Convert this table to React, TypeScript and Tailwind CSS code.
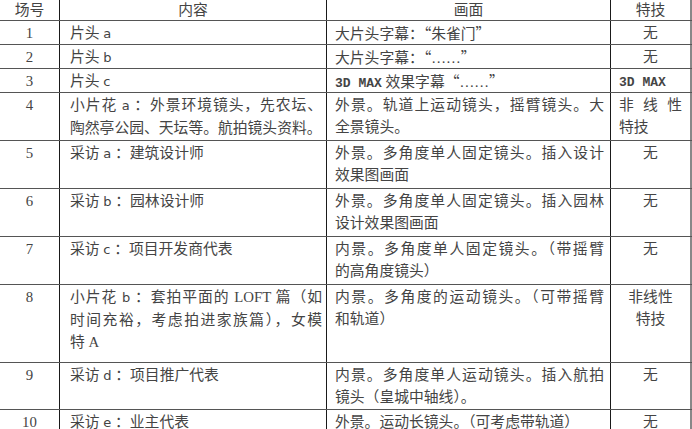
import React from "react";

type Cell = React.ReactNode[];

type Row = {
  no: string;
  h: string;
  content: Cell;
  shot: Cell;
  fx: React.ReactNode;
};

// latin letters in the content column look like a wide sans
const L = ({ children }: { children: React.ReactNode }) => (
  <span className="font-['DejaVu_Sans','Noto_Sans_CJK_SC',sans-serif] text-[13px]">
    {children}
  </span>
);

const M = ({ children }: { children: React.ReactNode }) => (
  <span className="font-['Liberation_Mono',monospace] text-[13px] font-bold">
    {children}
  </span>
);

// full-width punctuation (quotes)
const C = ({ children }: { children: React.ReactNode }) => (
  <span className="font-['Noto_Sans_CJK_SC',sans-serif]">{children}</span>
);

const None = () => <div className="text-center">无</div>;

const rows: Row[] = [
  {
    no: "1",
    h: "h-[24px]",
    content: [<>片头 <L>a</L></>],
    shot: [<>大片头字幕：<C>“</C>朱雀门<C>”</C></>],
    fx: <None />,
  },
  {
    no: "2",
    h: "h-[24px]",
    content: [<>片头 <L>b</L></>],
    shot: [<>大片头字幕：<C>“</C>……<C>”</C></>],
    fx: <None />,
  },
  {
    no: "3",
    h: "h-[24px]",
    content: [<>片头 <L>c</L></>],
    shot: [<><M>3D MAX</M> 效果字幕<C>“</C>……<C>”</C></>],
    fx: <M>3D MAX</M>,
  },
  {
    no: "4",
    h: "h-[48px]",
    content: [
      <>小片花 <L>a</L> ：外景环境镜头，先农坛、</>,
      "陶然亭公园、天坛等。航拍镜头资料。",
    ],
    shot: ["外景。轨道上运动镜头，摇臂镜头。大", "全景镜头。"],
    fx: (
      <>
        <div className="[text-align-last:justify]">非线性</div>
        <div>特技</div>
      </>
    ),
  },
  {
    no: "5",
    h: "h-[48px]",
    content: [<>采访 <L>a</L> ：建筑设计师</>],
    shot: ["外景。多角度单人固定镜头。插入设计", "效果图画面"],
    fx: <None />,
  },
  {
    no: "6",
    h: "h-[48px]",
    content: [<>采访 <L>b</L> ：园林设计师</>],
    shot: ["外景。多角度单人固定镜头。插入园林", "设计效果图画面"],
    fx: <None />,
  },
  {
    no: "7",
    h: "h-[48px]",
    content: [<>采访 <L>c</L> ：项目开发商代表</>],
    shot: ["内景。多角度单人固定镜头。（带摇臂", "的高角度镜头）"],
    fx: <None />,
  },
  {
    no: "8",
    h: "h-[78px]",
    content: [
      <>小片花 <L>b</L> ：套拍平面的 LOFT 篇（如</>,
      "时间充裕，考虑拍进家族篇），女模",
      "特 A",
    ],
    shot: ["内景。多角度的运动镜头。（可带摇臂", "和轨道）"],
    fx: (
      <div className="text-center">
        <div>非线性</div>
        <div>特技</div>
      </div>
    ),
  },
  {
    no: "9",
    h: "h-[47px]",
    content: [<>采访 <L>d</L> ：项目推广代表</>],
    shot: ["内景。多角度单人运动镜头。插入航拍", "镜头（皇城中轴线）。"],
    fx: <None />,
  },
  {
    no: "10",
    h: "h-[26px]",
    content: [<>采访 <L>e</L> ：业主代表</>],
    shot: ["外景。运动长镜头。（可考虑带轨道）"],
    fx: <None />,
  },
];

function Lines({ lines }: { lines: Cell }) {
  return (
    <>
      {lines.map((line, i) => (
        <div
          key={i}
          className={
            i < lines.length - 1
              ? "whitespace-nowrap text-justify [text-align-last:justify]"
              : "whitespace-nowrap"
          }
        >
          {line}
        </div>
      ))}
    </>
  );
}

export default function App() {
  return (
    <div className="w-[692px] h-[429px] overflow-hidden bg-white text-[#444] text-[14.8px] leading-[22px] font-['Liberation_Serif','Noto_Sans_CJK_SC',serif]">
      {/* header */}
      <div className="flex h-[21px] border-b border-[#555]">
        <div className="w-[60px] border-r border-[#1a1a1a] text-center leading-[20px]">场号</div>
        <div className="w-[267px] border-r border-[#1a1a1a] text-center leading-[20px]">内容</div>
        <div className="w-[284px] border-r border-[#1a1a1a] text-center leading-[20px]">画面</div>
        <div className="w-[81px] border-r-2 border-[#888] text-center leading-[20px]">特技</div>
      </div>

      {rows.map((r) => (
        <div key={r.no} className={`flex ${r.h} border-b border-[#555]`}>
          <div className="w-[60px] shrink-0 border-r border-[#1a1a1a] text-center pt-[1px]">{r.no}</div>
          <div className="w-[267px] shrink-0 overflow-hidden border-r border-[#1a1a1a] pl-[10px] pr-[4px] pt-[1px]">
            <Lines lines={r.content} />
          </div>
          <div className="w-[284px] shrink-0 overflow-hidden border-r border-[#1a1a1a] pl-[8px] pr-[6px] pt-[1px]">
            <Lines lines={r.shot} />
          </div>
          <div className="w-[81px] shrink-0 border-r-2 border-[#888] px-[8px] pt-[1px]">{r.fx}</div>
        </div>
      ))}
    </div>
  );
}
